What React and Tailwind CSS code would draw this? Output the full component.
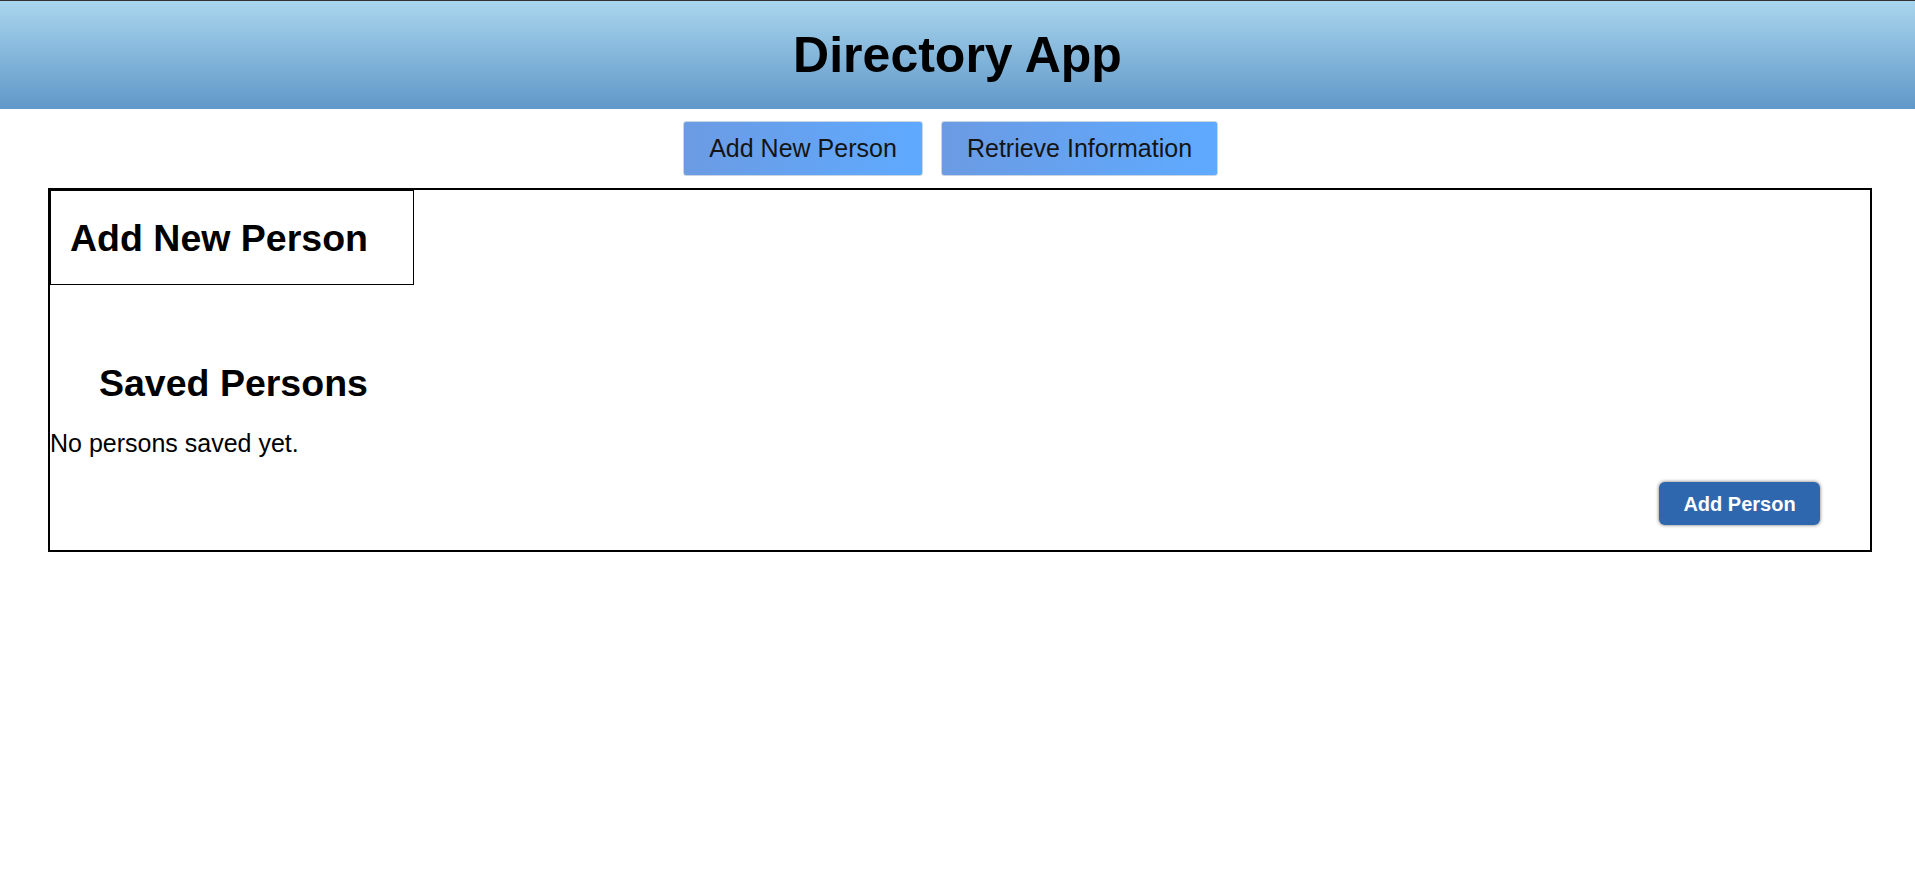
export default function App() {
  return (
    <div className="min-h-[869px] bg-white text-black" style={{ fontFamily: '"Liberation Sans", Arial, sans-serif' }}>
      <header className="h-[109px] border-t border-[#333333] bg-gradient-to-b from-[#a9d6ee] to-[#6198c8] flex items-center justify-center">
        <h1 className="text-[50px] font-bold leading-none">Directory App</h1>
      </header>
      <nav className="mt-[12px] flex justify-center gap-[18px] pr-[14px]">
        <button className="h-[55px] w-[240px] rounded-[3px] border border-[#c9d5e3] bg-gradient-to-r from-[#6b9be3] to-[#5eaaff] text-[25px] text-[#141414]">
          Add New Person
        </button>
        <button className="h-[55px] w-[277px] rounded-[3px] border border-[#c9d5e3] bg-gradient-to-r from-[#6b9be3] to-[#5eaaff] text-[25px] text-[#141414]">
          Retrieve Information
        </button>
      </nav>
      <main className="mt-[12px] ml-[48px] w-[1824px] border-2 border-black">
        <div className="h-[95px] w-[364px] border border-black flex items-center pl-[19px]">
          <h2 className="text-[37.5px] font-bold leading-[42px]">Add New Person</h2>
        </div>
        <h2 className="mt-[77px] ml-[49px] text-[37.5px] font-bold leading-[42px]">Saved Persons</h2>
        <p className="mt-[25px] text-[25px] leading-[28px]">No persons saved yet.</p>
        <div className="mt-[25px] mb-[25px] flex justify-end pr-[50px]">
          <button className="h-[43px] w-[161px] rounded-[6px] bg-[#2f67ae] text-[20px] font-bold text-white shadow-[0_0_3px_1px_rgba(0,0,0,0.35)]">
            Add Person
          </button>
        </div>
      </main>
    </div>
  );
}
